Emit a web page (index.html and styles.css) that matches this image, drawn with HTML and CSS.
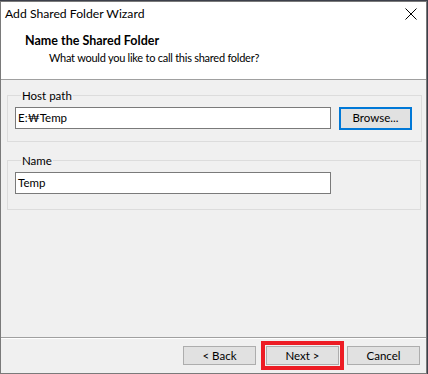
FILE: index.html
```html
<!DOCTYPE html>
<html>
<head>
<meta charset="utf-8">
<link rel="stylesheet" href="styles.css">
</head>
<body>
<div class="window">
  <div class="header">
    <div class="titlebar">
      <span class="title">Add Shared Folder Wizard</span>
      <svg class="close" width="12" height="12" viewBox="0 0 12 12"><path d="M0.5 0.5 L11.5 11.5 M11.5 0.5 L0.5 11.5" stroke="#000" stroke-width="1" fill="none"/></svg>
    </div>
    <div class="heading">Name the Shared Folder</div>
    <div class="subheading">What would you like to call this shared folder?</div>
  </div>
  <div class="content">
    <fieldset class="group">
      <legend>Host path</legend>
      <div class="row">
        <div class="input">E:₩Temp</div>
        <div class="btn focused">Browse...</div>
      </div>
    </fieldset>
    <fieldset class="group group-name">
      <legend>Name</legend>
      <div class="row">
        <div class="input">Temp</div>
      </div>
    </fieldset>
  </div>
  <div class="footer">
    <div class="btn">&lt; Back</div>
    <div class="highlight"><div class="btn">Next &gt;</div></div>
    <div class="btn">Cancel</div>
  </div>
</div>
</body>
</html>
```

FILE: styles.css
```css
html, body {
  margin: 0;
  padding: 0;
}
body {
  background: #3c3f4a;
  width: 428px;
  height: 374px;
  overflow: hidden;
  font-family: Lato, "Noto Sans", sans-serif;
  font-size: 11.5px;
  color: #000;
}
.window {
  margin-top: 1px;
  width: 425px;
  height: 371px;
  border: 1px solid #7a7a7a;
  background: #f0f0f0;
  display: flex;
  flex-direction: column;
}
.header {
  background: #fff;
  border-bottom: 1px solid #a0a0a0;
  box-sizing: border-box;
  height: 78px;
}
.titlebar {
  height: 24px;
  display: flex;
  align-items: center;
  justify-content: space-between;
  padding: 0 9px 0 4px;
}
.title {
  font-size: 12.2px;
  line-height: 16px;
}
.close {
  display: block;
}
.heading {
  font-weight: bold;
  font-size: 12.5px;
  margin-left: 24px;
  margin-top: 7px;
  line-height: 16px;
}
.subheading {
  font-size: 11px;
  letter-spacing: -0.25px;
  margin-left: 48px;
  margin-top: 1px;
  line-height: 16px;
}
.content {
  flex: 1;
  padding: 8px 5px 0 6px;
  display: flex;
  flex-direction: column;
  gap: 11px;
}
.group {
  margin: 0;
  border: 1px solid #dcdcdc;
  padding: 3px 9px 11px 7px;
}
.group-name {
  padding-bottom: 14px;
}
.group legend {
  padding: 0 1px;
  margin-left: 6px;
  line-height: 15px;
}
.row {
  display: flex;
  align-items: center;
  gap: 8px;
  min-height: 24px;
}
.input {
  height: 20px;
  border: 1px solid #7a7a7a;
  background: #fff;
  line-height: 20px;
  padding-left: 2px;
  width: 312px;
}
.btn {
  width: 71px;
  height: 17px;
  border: 1px solid #adadad;
  background: #e1e1e1;
  display: flex;
  align-items: center;
  justify-content: center;
  line-height: 16px;
}
.btn.focused {
  border: 2px solid #0078d7;
  width: 69px;
  height: 19px;
}
.footer {
  height: 35px;
  border-top: 1px solid #a0a0a0;
  box-shadow: inset 0 1px 0 #fff;
  display: flex;
  align-items: center;
  justify-content: flex-end;
  padding-right: 6px;
  gap: 3px;
}
.highlight {
  border: 4px solid #ed1c24;
  padding: 1px;
  margin: 0 0 0 2px;
}
```
